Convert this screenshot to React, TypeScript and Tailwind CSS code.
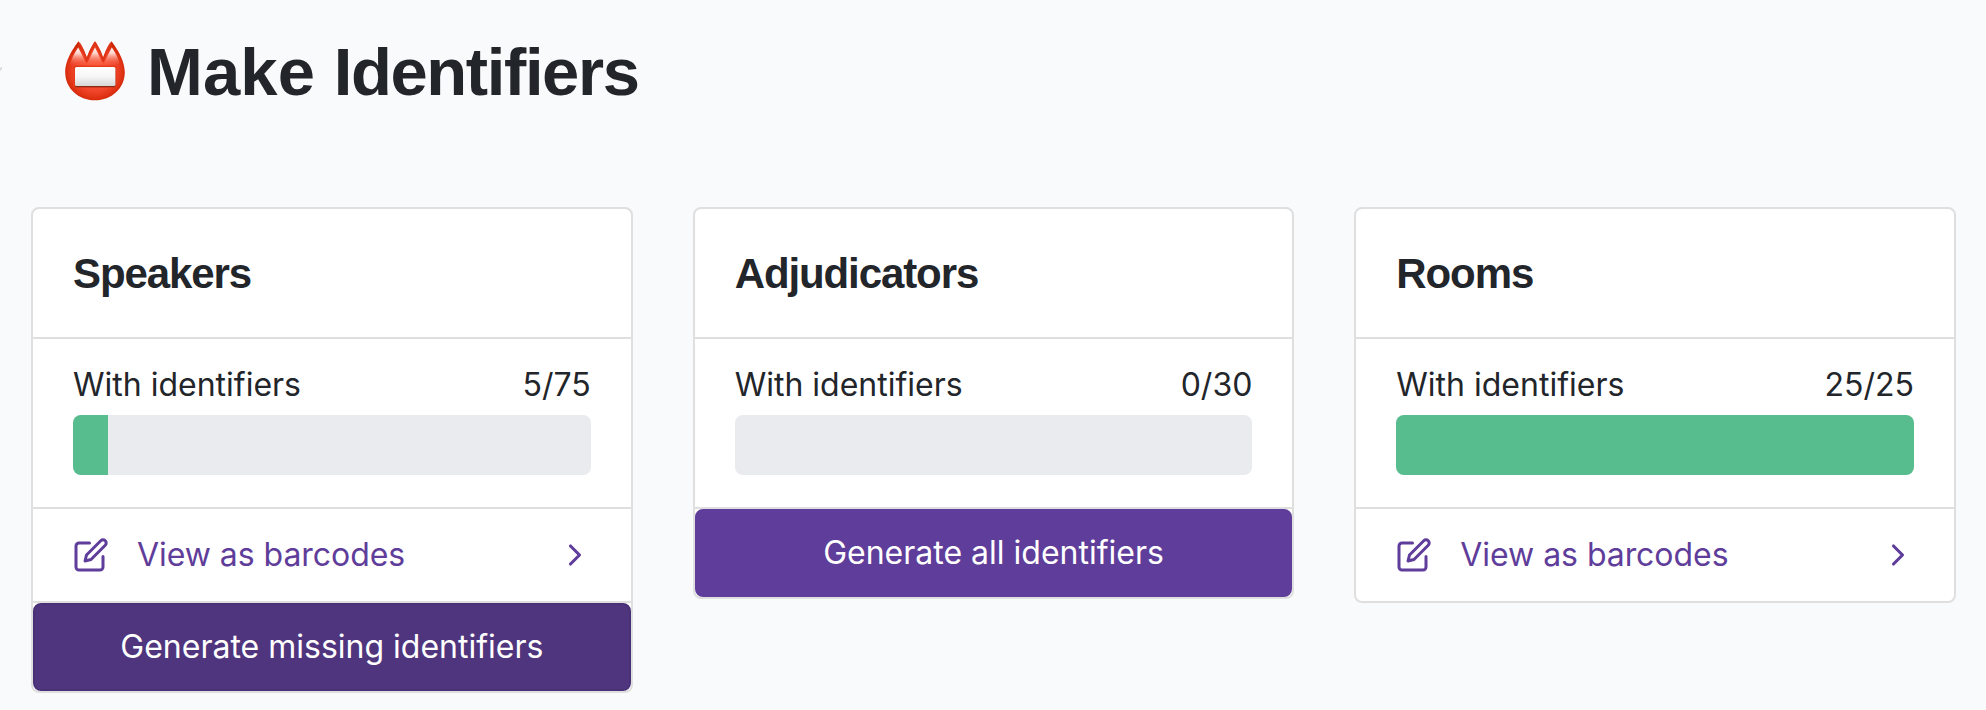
import React from "react";

interface CardProps {
  title: string;
  done: number;
  total: number;
  link?: boolean;
  action?: string;
  pressed?: boolean;
}

const cards: CardProps[] = [
  { title: "Speakers", done: 5, total: 75, link: true, action: "Generate missing identifiers", pressed: true },
  { title: "Adjudicators", done: 0, total: 30, action: "Generate all identifiers" },
  { title: "Rooms", done: 25, total: 25, link: true },
];

function NameBadge() {
  const outline =
    "M13.5 0.2 C14.4 1.6 19.5 10.5 21.8 16.5 C23.4 11.5 28.4 1.8 30 0.2 C31.6 1.8 36.6 11.5 38.2 16.5 C40.5 10.5 45.6 1.6 46.5 0.2 C49 3.5 59.8 17.5 59.8 31 C59.8 47.5 46.5 59.3 30 59.3 C13.5 59.3 0.2 47.5 0.2 31 C0.2 17.5 11 3.5 13.5 0.2Z";
  return (
    <svg className="h-[60px] w-[60px] shrink-0" viewBox="0 0 60 60" aria-hidden="true">
      <defs>
        <radialGradient id="badge-body" cx="0.5" cy="0.5" r="0.54">
          <stop offset="0" stopColor="#ff6040" />
          <stop offset="0.65" stopColor="#f0452a" />
          <stop offset="0.85" stopColor="#e03314" />
          <stop offset="1" stopColor="#c92204" />
        </radialGradient>
        <linearGradient id="badge-shine" x1="0" y1="6" x2="0" y2="25" gradientUnits="userSpaceOnUse">
          <stop offset="0" stopColor="#ffffff" />
          <stop offset="0.35" stopColor="#ffd0c6" />
          <stop offset="1" stopColor="#f8644a" stopOpacity="0" />
        </linearGradient>
        <linearGradient id="badge-label" x1="0" y1="0" x2="0" y2="1">
          <stop offset="0" stopColor="#ffffff" />
          <stop offset="0.5" stopColor="#f6f6f6" />
          <stop offset="1" stopColor="#d6d6d6" />
        </linearGradient>
      </defs>
      <path d={outline} fill="url(#badge-body)" />
      <path
        d="M13.2 6.5 C9.5 12 6 18 4.6 26 L55.4 26 C54 18 50.5 12 46.8 6.5 C43.8 12 40.8 18 38.2 24.5 C35.8 18 32.5 11.5 30 6.5 C27.5 11.5 24.2 18 21.8 24.5 C19.2 18 16.2 12 13.2 6.5Z"
        fill="url(#badge-shine)"
      />
      <path
        d="M14 2 C16 5 20 13.5 21.8 20 C23.6 13.5 28 5 30 2 C32 5 36.4 13.5 38.2 20 C40 13.5 44 5 46 2"
        fill="none"
        stroke="#de3517"
        strokeWidth="2.2"
        strokeLinejoin="round"
      />
      <rect x="8.6" y="24.6" width="43" height="22" rx="2" fill="#e53c1c" />
      <rect x="10" y="27.2" width="40.4" height="19" rx="1.6" fill="#8b2a17" />
      <rect x="10" y="26" width="40.4" height="19" rx="1.6" fill="url(#badge-label)" />
    </svg>
  );
}

function EditIcon() {
  return (
    <svg className="h-9 w-9 shrink-0" viewBox="0 0 24 24" fill="none" stroke="currentColor" strokeWidth="2" strokeLinecap="round" strokeLinejoin="round" aria-hidden="true">
      <path d="M11 4H4a2 2 0 0 0-2 2v14a2 2 0 0 0 2 2h14a2 2 0 0 0 2-2v-7" />
      <path d="M18.5 2.5a2.121 2.121 0 0 1 3 3L12 15l-4 1 1-4 9.5-9.5z" />
    </svg>
  );
}

function ChevronIcon() {
  return (
    <svg className="-mr-0.5 ml-auto h-9 w-9 shrink-0" viewBox="0 0 24 24" fill="none" stroke="currentColor" strokeWidth="2.1" strokeLinecap="round" strokeLinejoin="round" aria-hidden="true">
      <path d="m9 18 6-6-6-6" />
    </svg>
  );
}

function Card({ title, done, total, link, action, pressed }: CardProps) {
  return (
    <section className="rounded-lg border-2 border-[#dfdfdf] bg-white">
      <div className="flex h-32 items-center px-10 pt-0.5">
        <h4 className="font-['Liberation_Sans',Arial,sans-serif] text-[42px] leading-[50px] font-bold tracking-[-1.1px]">{title}</h4>
      </div>
      <div className="h-[170px] border-t-2 border-[#dfdfdf] px-10 pt-[22px]">
        <div className="flex justify-between leading-[48px]">
          <span>With identifiers</span>
          <span>
            {done}/{total}
          </span>
        </div>
        <div className="mt-1.5 h-[60px] overflow-hidden rounded-lg bg-[#eaebef]">
          <div className="h-full bg-[#57bc8e]" style={{ width: `${(done / total) * 100}%` }} />
        </div>
      </div>
      {link && (
        <a className="flex h-[94px] items-center border-t-2 border-[#dfdfdf] px-10 text-[#5f3d9a]">
          <EditIcon />
          <span className="ml-7 leading-[48px] tracking-[-0.05px]">View as barcodes</span>
          <ChevronIcon />
        </a>
      )}
      {action && (
        <div className="border-t-2 border-[#dfdfdf]">
          <button
            className={
              pressed
                ? "block h-[88px] w-full rounded-lg border-2 border-[#4a3177] bg-[#4f357e] pb-px text-white"
                : "block h-[88px] w-full rounded-lg border-2 border-[#5f3d9a] bg-[#5f3d9a] pb-px text-white"
            }
          >
            {action}
          </button>
        </div>
      )}
    </section>
  );
}

export default function App() {
  return (
    <main className="flex h-[710px] flex-col overflow-hidden bg-[#f9fafc] font-['Inter',sans-serif] text-[32px] text-[#22252a]">
      <header className="flex h-[207px] items-start pt-[41px]">
        <svg className="mt-[26px] h-1 w-0.5 shrink-0" viewBox="0 0 2 4" aria-hidden="true">
          <path d="M0 3 L1.7 0.8" stroke="#d2d4d6" strokeWidth="1.5" strokeLinecap="round" />
        </svg>
        <div className="ml-[63px] flex">
          <NameBadge />
          <h1 className="ml-[22px] font-['Liberation_Sans',Arial,sans-serif] text-[67px] leading-[61px] font-bold whitespace-pre">
            <span className="tracking-[0.1px]">Make </span>
            <span className="tracking-[-1.4px]">Identifiers</span>
          </h1>
        </div>
      </header>
      <div className="grid grid-cols-3 items-start gap-[60px] pr-[30px] pl-[31px]">
        {cards.map((card) => (
          <Card key={card.title} {...card} />
        ))}
      </div>
    </main>
  );
}
